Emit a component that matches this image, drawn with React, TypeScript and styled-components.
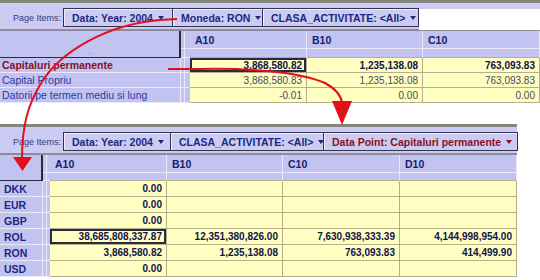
import React from 'react';
import styled, { createGlobalStyle } from 'styled-components';

const Global = createGlobalStyle`
  html, body { margin: 0; padding: 0; background: #ffffff; }
  body { font-family: "Liberation Sans", Arial, sans-serif; }
  * { box-sizing: border-box; }
`;

const PURPLE = '#c3c3f1';
const BAR = '#cbcbf3';
const YELLOW = '#ffffc2';
const TAN = '#b6ae8c';
const LIGHT = '#e9e9fb';
const DARK = '#2a2a3c';

const Page = styled.div`
  position: relative;
  width: 540px;
  height: 280px;
  overflow: hidden;
  background: #ffffff;
  display: flex;
  flex-direction: column;
`;

const Section = styled.div<{ $w: number; $mt: number }>`
  width: ${(p) => p.$w}px;
  margin-top: ${(p) => p.$mt}px;
  display: flex;
  flex-direction: column;
`;

const Toolbar = styled.div`
  border-top: 3px solid #85857b;
  border-bottom: 2px solid #8c8c9c;
  background: ${BAR};
  height: 31px;
  padding-top: 5px;
  display: flex;
  align-items: flex-start;
`;

const Label = styled.span`
  width: 63px;
  padding-left: 13px;
  height: 19px;
  display: flex;
  align-items: center;
  font-size: 9px;
  color: #3a3a78;
  white-space: nowrap;
`;

const Item = styled.div<{ $w: number; $red?: boolean }>`
  width: ${(p) => p.$w}px;
  height: 19px;
  margin-right: -1px;
  border: 1px solid #33334a;
  box-shadow: inset 1px 1px 0 #eeeefc;
  background: ${BAR};
  display: flex;
  align-items: center;
  padding-left: 8px;
  font-size: 10.5px;
  font-weight: bold;
  white-space: nowrap;
  color: ${(p) => (p.$red ? '#8a1024' : '#1b2a7c')};
`;

const Caret = styled.span<{ $red?: boolean }>`
  display: inline-block;
  margin-left: 5px;
  width: 0;
  height: 0;
  border-left: 3.5px solid transparent;
  border-right: 3.5px solid transparent;
  border-top: 4px solid ${(p) => (p.$red ? '#8a1024' : '#1b2a7c')};
`;

const Filler = styled.div`
  flex: 1;
  height: 21px;
  margin-top: 1px;
  margin-left: 1px;
  background: #ffffff;
`;

const Grid = styled.div<{ $cols: string; $rows: string }>`
  display: grid;
  grid-template-columns: ${(p) => p.$cols};
  grid-template-rows: ${(p) => p.$rows};
`;

const Corner = styled.div`
  grid-row: span 2;
  background: ${PURPLE};
  border-right: 2px solid ${DARK};
  border-bottom: 1px solid ${DARK};
  position: relative;
  display: flex;
  align-items: flex-end;
  justify-content: center;
  font-size: 8px;
  color: #8a8ab0;
  line-height: 8px;
  padding-bottom: 1px;
`;

const Gutter = styled.div`
  background: linear-gradient(to right, ${PURPLE} 0 3px, ${LIGHT} 3px 4px, ${PURPLE} 4px);
  border-bottom: 1px solid ${LIGHT};
`;

const ColHead = styled.div`
  background: ${PURPLE};
  border-right: 1px solid ${LIGHT};
  border-bottom: 1px solid ${LIGHT};
  padding-left: 5px;
  display: flex;
  align-items: center;
  font-size: 10.5px;
  font-weight: bold;
  color: #13226a;
`;

const Thin = styled.div`
  background: ${PURPLE};
  border-right: 1px solid ${LIGHT};
  border-bottom: 1px solid ${TAN};
`;

const RowHead = styled.div<{ $tone: 'red' | 'blue' | 'bold' }>`
  background: ${PURPLE};
  border-bottom: 1px solid ${LIGHT};
  border-right: 1px solid ${LIGHT};
  padding-left: ${(p) => (p.$tone === 'bold' ? 4 : 2)}px;
  display: flex;
  align-items: center;
  white-space: nowrap;
  font-size: 10.5px;
  font-weight: ${(p) => (p.$tone === 'blue' ? 'normal' : 'bold')};
  color: ${(p) => (p.$tone === 'red' ? '#86101e' : p.$tone === 'bold' ? '#1a2a80' : '#2b3a9c')};
`;

const Cell = styled.div<{ $bold?: boolean; $sel?: boolean }>`
  background: ${YELLOW};
  border-right: 1px solid ${TAN};
  border-bottom: 1px solid ${TAN};
  padding-right: 4px;
  display: flex;
  align-items: center;
  justify-content: flex-end;
  white-space: nowrap;
  font-size: 10px;
  font-weight: ${(p) => (p.$bold ? 'bold' : 'normal')};
  color: ${(p) => (p.$bold ? '#12124a' : '#4a4a58')};
  box-shadow: ${(p) => (p.$sel ? `inset 0 0 0 2px ${DARK}` : 'none')};
`;

const Overlay = styled.svg`
  position: absolute;
  left: 0;
  top: 0;
  pointer-events: none;
`;

type Row = { label: string; tone: 'red' | 'blue' | 'bold'; bold: boolean; sel?: number; values: string[] };

const topRows: Row[] = [
  { label: 'Capitaluri permanente', tone: 'red', bold: true, sel: 0, values: ['3,868,580.82', '1,235,138.08', '763,093.83'] },
  { label: 'Capital Propriu', tone: 'blue', bold: false, values: ['3,868,580.83', '1,235,138.08', '763,093.83'] },
  { label: 'Datorii pe termen mediu si lung', tone: 'blue', bold: false, values: ['-0.01', '0.00', '0.00'] },
];

const bottomRows: Row[] = [
  { label: 'DKK', tone: 'bold', bold: true, values: ['0.00', '', '', ''] },
  { label: 'EUR', tone: 'bold', bold: true, values: ['0.00', '', '', ''] },
  { label: 'GBP', tone: 'bold', bold: true, values: ['0.00', '', '', ''] },
  { label: 'ROL', tone: 'bold', bold: true, sel: 0, values: ['38,685,808,337.87', '12,351,380,826.00', '7,630,938,333.39', '4,144,998,954.00'] },
  { label: 'RON', tone: 'bold', bold: true, values: ['3,868,580.82', '1,235,138.08', '763,093.83', '414,499.90'] },
  { label: 'USD', tone: 'bold', bold: true, values: ['0.00', '', '', ''] },
];

type ItemDef = { text: string; w: number; red?: boolean };

function PageItems({ items, filler }: { items: ItemDef[]; filler?: boolean }) {
  return (
    <Toolbar>
      <Label>Page Items:</Label>
      {items.map((it) => (
        <Item key={it.text} $w={it.w} $red={it.red}>
          {it.text}
          <Caret $red={it.red} />
        </Item>
      ))}
      {filler && <Filler />}
    </Toolbar>
  );
}

function Table({ cols, rows, heads, data, dots }: { cols: string; rows: string; heads: string[]; data: Row[]; dots?: boolean }) {
  return (
    <Grid $cols={cols} $rows={rows}>
      <Corner>{dots ? '...' : ''}</Corner>
      <Gutter />
      {heads.map((h) => (
        <ColHead key={h}>{h}</ColHead>
      ))}
      <Gutter />
      {heads.map((h) => (
        <Thin key={h + 't'} />
      ))}
      {data.map((r) => (
        <React.Fragment key={r.label}>
          <RowHead $tone={r.tone}>{r.label}</RowHead>
          <Gutter />
          {r.values.map((v, i) => (
            <Cell key={i} $bold={r.bold} $sel={r.sel === i}>
              {v}
            </Cell>
          ))}
        </React.Fragment>
      ))}
    </Grid>
  );
}

export default function App() {
  return (
    <>
      <Global />
      <Page>
        <Section $w={540} $mt={0}>
          <PageItems
            filler
            items={[
              { text: 'Data: Year: 2004', w: 110 },
              { text: 'Moneda: RON', w: 91 },
              { text: 'CLASA_ACTIVITATE: <All>', w: 157 },
            ]}
          />
          <Table
            cols="181px 9px 117px 116px 117px"
            rows="18px 9px repeat(3, 15px)"
            heads={['A10', 'B10', 'C10']}
            data={topRows}
            dots
          />
        </Section>
        <Section $w={517} $mt={21}>
          <PageItems
            items={[
              { text: 'Data: Year: 2004', w: 108 },
              { text: 'CLASA_ACTIVITATE: <All>', w: 154 },
              { text: 'Data Point: Capitaluri permanente', w: 195, red: true },
            ]}
          />
          <Table
            cols="43px 7px 117px 116px 117px 117px"
            rows="18px 8px repeat(6, 16px)"
            heads={['A10', 'B10', 'C10', 'D10']}
            data={bottomRows}
          />
        </Section>
        <Overlay width="540" height="280" viewBox="0 0 540 280">
          <path
            d="M 177 19 L 160 20 C 110 24, 60 50, 40 85 C 28 105, 22 125, 22 160"
            fill="none"
            stroke="#e3101c"
            strokeWidth="2"
          />
          <polygon points="13,157 32,157 22.5,171" fill="#e3101c" />
          <path
            d="M 168 69 L 200 69 C 250 68, 300 72, 325 83 C 336 89, 341 95, 342 103"
            fill="none"
            stroke="#e3101c"
            strokeWidth="2"
          />
          <polygon points="332,101 352,101 342,125" fill="#e3101c" />
        </Overlay>
      </Page>
    </>
  );
}
